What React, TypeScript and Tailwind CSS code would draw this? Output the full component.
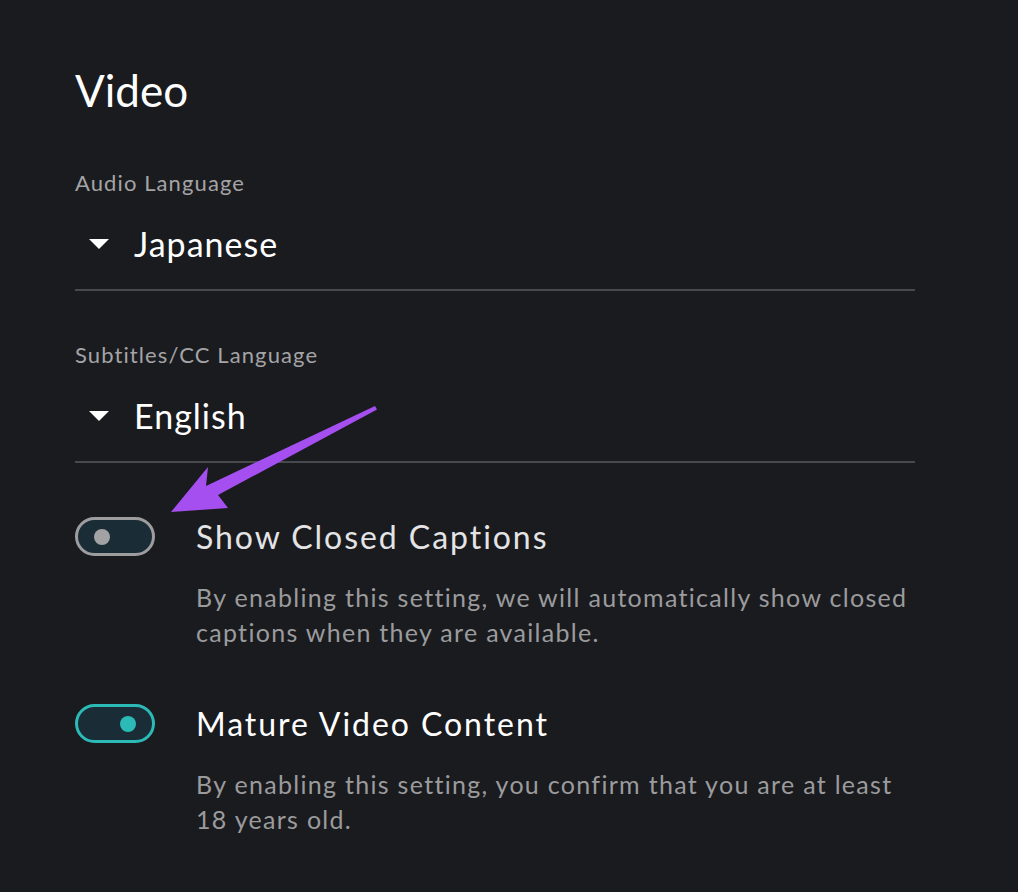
import React from 'react';

const FONT = { fontFamily: 'Lato, "Noto Sans", sans-serif' };

function Caret() {
  return (
    <svg width="20" height="10" viewBox="0 0 20 10" className="shrink-0">
      <path d="M0 0 L20 0 L10 10 Z" fill="#ffffff" />
    </svg>
  );
}

function LanguageSelect({ label, value, first }: { label: string; value: string; first?: boolean }) {
  return (
    <div className={first ? 'mt-[60px]' : 'mt-[53px]'}>
      <div className="text-[22px] leading-none tracking-[1.1px] text-[#a4a4a6]">{label}</div>
      <div className="mt-[33px] flex items-center gap-[25px] pl-[14px]">
        <Caret />
        <span className="text-[34px] leading-none tracking-[1px] text-white">{value}</span>
      </div>
      <div className="mt-[28px] h-[2px] bg-[#48494e]" />
    </div>
  );
}

function Toggle({ on }: { on: boolean }) {
  return (
    <div
      className={
        'relative h-[39px] w-[80px] shrink-0 rounded-full border-[3px] bg-[#1a2c36] flex items-center ' +
        (on ? 'border-[#2bbab6] justify-end pr-[16px]' : 'border-[#9d9d9f] justify-start pl-[16px]')
      }
    >
      <span className={'block h-[16px] w-[16px] rounded-full ' + (on ? 'bg-[#2bbab6]' : 'bg-[#a2a2a4]')} />
    </div>
  );
}

function ToggleRow({ on, title, desc, titleColor }: { on: boolean; title: string; desc: string; titleColor: string }) {
  return (
    <div className="flex items-start gap-[41px]">
      <Toggle on={on} />
      <div className="flex-1">
        <div className={'mt-[4px] text-[32px] leading-none tracking-[1.95px] ' + titleColor}>{title}</div>
        <p className="mt-[27px] text-[25px] leading-[35px] tracking-[1.3px] text-[#9b9b9d]">{desc}</p>
      </div>
    </div>
  );
}

export default function App() {
  return (
    <div className="relative min-h-screen w-full bg-[#1a1b1f]" style={FONT}>
      <div className="w-[915px] pl-[75px] pt-[68px] pb-[40px]">
        <h1 className="text-[44px] leading-none text-white">Video</h1>
        <LanguageSelect label="Audio Language" value="Japanese" first />
        <LanguageSelect label="Subtitles/CC Language" value="English" />
        <div className="mt-[54px] flex flex-col gap-[54px]">
          <ToggleRow
            on={false}
            title="Show Closed Captions"
            titleColor="text-[#e4e4e6]"
            desc="By enabling this setting, we will automatically show closed captions when they are available."
          />
          <ToggleRow
            on
            title="Mature Video Content"
            titleColor="text-white"
            desc="By enabling this setting, you confirm that you are at least 18 years old."
          />
        </div>
      </div>
      {/* annotation arrow */}
      <svg className="pointer-events-none absolute left-0 top-0" width="1018" height="892" viewBox="0 0 1018 892">
        <polygon
          points="375,406 377,409.5 218,495 228,508 171,512 208,467 206,486"
          fill="#a54ff0"
        />
      </svg>
    </div>
  );
}
